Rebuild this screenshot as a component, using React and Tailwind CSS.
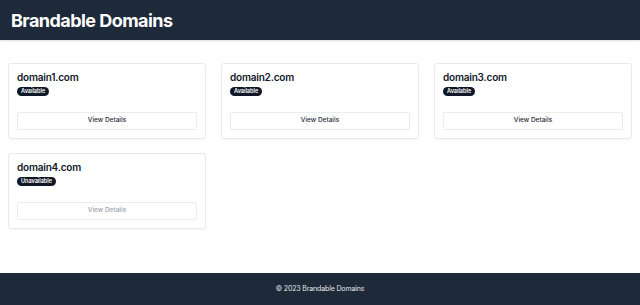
import React from "react";

const domains = [
  { name: "domain1.com", available: true },
  { name: "domain2.com", available: true },
  { name: "domain3.com", available: true },
  { name: "domain4.com", available: false },
];

function DomainCard({ name, available }) {
  return (
    <div className="flex flex-col items-start bg-white border border-[#e9e9e9] rounded-[3px] shadow-[0_1px_2px_rgba(0,0,0,0.04)] px-2 pt-[6px] pb-2">
      <h2 className="h-[14px] text-[10px] leading-[14px] font-semibold text-gray-900 tracking-[-0.02em]">{name}</h2>
      <span className="mt-[3px] h-[9px] flex items-center bg-gray-900 text-white text-[5.5px] font-semibold px-[4px] rounded-full">
        {available ? "Available" : "Unavailable"}
      </span>
      <button
        disabled={!available}
        className={
          "mt-[16px] self-stretch h-[18px] border border-[#ececec] rounded-[2px] bg-white text-[6.5px] font-medium " +
          (available ? "text-gray-800" : "text-gray-400")
        }
      >
        View Details
      </button>
    </div>
  );
}

export default function App() {
  return (
    <div className="flex flex-col min-h-screen bg-white" style={{ fontFamily: "Inter, 'Liberation Sans', sans-serif" }}>
      <header className="bg-gray-800 h-10 flex items-center px-[11px] shadow">
        <h1 className="text-white text-[18px] font-bold tracking-[-0.03em]">Brandable Domains</h1>
      </header>

      <main className="flex-1 px-2 pt-[23px]">
        <div className="grid grid-cols-3 gap-x-[15px] gap-y-[14px]">
          {domains.map((d) => (
            <DomainCard key={d.name} {...d} />
          ))}
        </div>
      </main>

      <footer className="bg-gray-800 h-8 flex items-center justify-center">
        <p className="text-gray-200 text-[7px] tracking-[-0.02em]">© 2023 Brandable Domains</p>
      </footer>
    </div>
  );
}
